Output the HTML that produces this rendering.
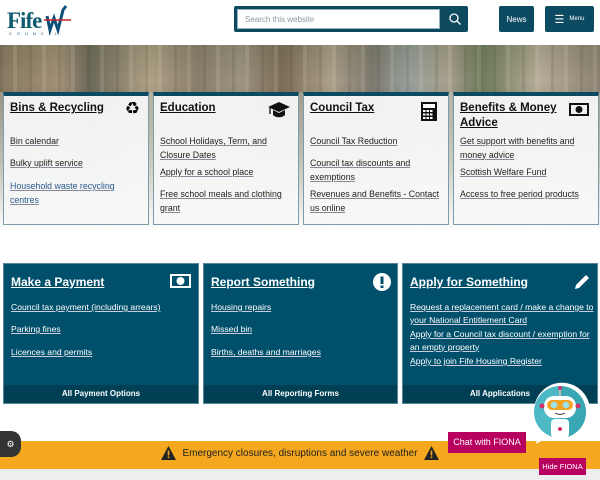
<!DOCTYPE html>
<html><head><meta charset="utf-8">
<style>
*{margin:0;padding:0;box-sizing:border-box}
body{width:600px;height:480px;overflow:hidden;font-family:"Liberation Sans",sans-serif;background:#fff;position:relative}
.hdr{position:absolute;left:0;top:0;width:600px;height:45px;background:#fff}
.search{position:absolute;left:234px;top:6px;width:234px;height:26px;border:1px solid #0d4a5f;border-radius:2px;background:#0d4a5f}
.search .in{position:absolute;left:2px;top:2px;width:203px;height:20px;background:#fff;border:1px solid #8fb0bd;font-size:8px;color:#8a99a0;padding:5px 7px}
.btn{position:absolute;top:6px;height:26px;background:#0b4a60;border-radius:2px;color:#fff;font-size:8px;display:flex;align-items:center;justify-content:center}
.hero{position:absolute;left:0;top:45px;width:600px;height:185px;overflow:hidden;
background:
repeating-linear-gradient(90deg,rgba(60,50,40,.12) 0 3px,rgba(255,255,255,0) 3px 13px,rgba(230,220,200,.15) 13px 17px,rgba(0,0,0,0) 17px 29px),
linear-gradient(180deg,rgba(70,80,50,.2) 0,rgba(0,0,0,0) 20%,rgba(40,40,30,.2) 45%,rgba(60,90,40,.35) 100%),
linear-gradient(90deg,#8a7a62 0%,#a39077 10%,#6d6a5a 15%,#b0a287 25%,#8b7f6c 33%,#9d9481 40%,#7d6d57 47%,#aca08a 55%,#7f7a70 62%,#97a09c 68%,#a8a08c 75%,#6d7a5b 80%,#b7ad98 90%,#8c8272 100%)}
.hero:after{content:"";position:absolute;left:0;top:47px;width:600px;height:140px;background:linear-gradient(180deg,rgba(200,210,200,.4),rgba(225,230,225,.7) 50%,#fff 100%)}
.card{position:absolute;top:92px;height:133px;width:146px;background:rgba(246,248,248,.93);border:1px solid #7d9ba8;border-top:4px solid #0b4a60}
.card h2{position:absolute;left:6px;top:5px;font-size:11.5px;font-weight:bold;color:#111;text-decoration:underline;line-height:15px}
.card .ic{position:absolute;right:8px;top:3px;font-size:17px}
.l{position:absolute;left:6px;font-size:8.8px;color:#222;text-decoration:underline;text-decoration-color:#889;line-height:13.5px;width:134px}
.dk{position:absolute;top:263px;height:141px;background:#00506b;border:1px solid #5a8797;color:#fff}
.dk h2{position:absolute;left:7px;top:11px;font-size:12px;font-weight:bold;text-decoration:underline}
.dk .l{color:#fff;text-decoration-color:#ccd;left:7px;width:186px;line-height:12.5px;font-size:8.6px}
.dk .ft{position:absolute;left:0;bottom:0;width:100%;height:18px;background:#013f55;font-size:8px;font-weight:bold;text-align:center;line-height:18px}
.warn{position:absolute;left:0;top:441px;width:600px;height:28px;background:#f4a71f;font-size:10px;color:#222;text-align:center;line-height:26px}
.tri{display:inline-block;vertical-align:middle;margin:0 6px}
</style></head><body>
<div class="hdr">
<svg style="position:absolute;left:7px;top:4px" width="64" height="32" viewBox="0 0 64 32">
<text x="0" y="24" font-family="Liberation Serif" font-weight="bold" font-size="23" fill="#0e5a6f" letter-spacing="-1">Fife</text>
<path d="M40 12 l3 14 l4 -12 l4 12 l5 -20 l3 -4" fill="none" stroke="#0e4f7a" stroke-width="3"/>
<path d="M37 16 L64 16" stroke="#c8202d" stroke-width="1.5"/>
<text x="2" y="31" font-size="4" letter-spacing="5" fill="#0e4f7a">COUNCIL</text>
</svg>
<div class="search"><div class="in">Search this website</div>
<svg style="position:absolute;left:213px;top:5px" width="14" height="14" viewBox="0 0 14 14"><circle cx="6" cy="6" r="4" fill="none" stroke="#fff" stroke-width="1.3"/><path d="M9 9l3.5 3.5" stroke="#fff" stroke-width="1.3"/></svg></div>
<div class="btn" style="left:499px;width:35px">News</div>
<div class="btn" style="left:545px;width:49px;font-size:6px"><span style="font-size:11px;margin-right:5px">☰</span>Menu</div>
</div>
<div class="hero"></div>

<div class="card" style="left:3px"><h2>Bins &amp; Recycling</h2><div class="ic">♻</div>
<div class="l" style="top:39px">Bin calendar</div><div class="l" style="top:61px">Bulky uplift service</div>
<div class="l" style="top:84px;color:#2a5a8a;width:118px">Household waste recycling centres</div></div>
<div class="card" style="left:153px"><h2>Education</h2>
<svg class="ic" style="right:8px;top:6px" width="22" height="16" viewBox="0 0 22 16"><path d="M11 0L22 5 11 10 0 5z" fill="#111"/><path d="M5 8v5c3 3 9 3 12 0V8l-6 3z" fill="#111"/><path d="M2 6v6" stroke="#111" stroke-width="1.3"/></svg>
<div class="l" style="top:39px">School Holidays, Term, and Closure Dates</div><div class="l" style="top:70px">Apply for a school place</div>
<div class="l" style="top:92px">Free school meals and clothing grant</div></div>
<div class="card" style="left:303px"><h2>Council Tax</h2>
<svg class="ic" style="right:11px;top:6px" width="16" height="19" viewBox="0 0 16 19"><rect x="0" y="0" width="16" height="19" fill="#111"/><rect x="2" y="2" width="12" height="4" fill="#fff"/><g fill="#fff"><rect x="2" y="8" width="2.5" height="2"/><rect x="5.5" y="8" width="2.5" height="2"/><rect x="9" y="8" width="2.5" height="2"/><rect x="2" y="11.5" width="2.5" height="2"/><rect x="5.5" y="11.5" width="2.5" height="2"/><rect x="9" y="11.5" width="2.5" height="2"/><rect x="2" y="15" width="2.5" height="2"/><rect x="5.5" y="15" width="2.5" height="2"/><rect x="9" y="15" width="2.5" height="2"/></g></svg>
<div class="l" style="top:39px">Council Tax Reduction</div><div class="l" style="top:61px">Council tax discounts and exemptions</div>
<div class="l" style="top:92px">Revenues and Benefits - Contact us online</div></div>
<div class="card" style="left:453px"><h2>Benefits &amp; Money<br>Advice</h2>
<svg class="ic" style="right:9px;top:7px" width="20" height="13" viewBox="0 0 20 13"><rect x="1" y="1" width="18" height="11" fill="none" stroke="#111" stroke-width="2"/><circle cx="10" cy="6.5" r="3.5" fill="#111"/></svg>
<div class="l" style="top:39px;width:125px">Get support with benefits and money advice</div><div class="l" style="top:70px">Scottish Welfare Fund</div>
<div class="l" style="top:92px">Access to free period products</div></div>

<div class="dk" style="left:3px;width:196px"><h2>Make a Payment</h2>
<svg style="position:absolute;right:7px;top:10px" width="21" height="14" viewBox="0 0 21 14"><rect x="1" y="1" width="19" height="12" fill="none" stroke="#fff" stroke-width="2"/><circle cx="10.5" cy="7" r="4" fill="#fff"/></svg>
<div class="l" style="top:37px">Council tax payment (including arrears)</div><div class="l" style="top:59px">Parking fines</div><div class="l" style="top:82px">Licences and permits</div>
<div class="ft">All Payment Options</div></div>
<div class="dk" style="left:203px;width:195px"><h2>Report Something</h2>
<svg style="position:absolute;right:6px;top:9px" width="18" height="18" viewBox="0 0 18 18"><circle cx="9" cy="9" r="9" fill="#fff"/><rect x="7.5" y="3.5" width="3" height="7.5" fill="#00506b"/><rect x="7.5" y="12.5" width="3" height="2.5" fill="#00506b"/></svg>
<div class="l" style="top:37px">Housing repairs</div><div class="l" style="top:59px">Missed bin</div><div class="l" style="top:82px">Births, deaths and marriages</div>
<div class="ft">All Reporting Forms</div></div>
<div class="dk" style="left:402px;width:196px"><h2>Apply for Something</h2>
<svg style="position:absolute;right:6px;top:9px" width="18" height="18" viewBox="0 0 18 18"><path d="M2 16l1-4L13 2l3 3L6 15z" fill="#fff"/></svg>
<div class="l" style="top:37px">Request a replacement card / make a change to your National Entitlement Card</div>
<div class="l" style="top:64px">Apply for a Council tax discount / exemption for an empty property</div>
<div class="l" style="top:91px">Apply to join Fife Housing Register</div>
<div class="ft">All Applications</div></div>

<div class="warn"><svg class="tri" width="15" height="14" viewBox="0 0 15 14"><path d="M7.5 0L15 14H0z" fill="#222"/><rect x="6.7" y="4.5" width="1.6" height="5" fill="#f4a71f"/><rect x="6.7" y="10.5" width="1.6" height="1.6" fill="#f4a71f"/></svg>Emergency closures, disruptions and severe weather<svg class="tri" width="15" height="14" viewBox="0 0 15 14"><path d="M7.5 0L15 14H0z" fill="#222"/><rect x="6.7" y="4.5" width="1.6" height="5" fill="#f4a71f"/><rect x="6.7" y="10.5" width="1.6" height="1.6" fill="#f4a71f"/></svg></div>
<div style="position:absolute;left:0;top:469px;width:600px;height:11px;background:#eeeeee"></div>
<div style="position:absolute;left:0;top:431px;width:21px;height:26px;background:#333;border-radius:0 10px 10px 0;color:#fff;font-size:9px;line-height:26px;text-align:center">⚙</div>

<svg style="position:absolute;left:522px;top:382px" width="68" height="66" viewBox="0 0 68 66">
<path d="M14 62 L18 46 A28 28 0 1 1 28 54 Z" fill="#fff"/>
<circle cx="38" cy="30" r="26" fill="#4cb9c4"/>
<path d="M38 4 A26 26 0 0 1 38 56 Z" fill="#3aa7b4"/>
<rect x="37" y="6" width="2" height="8" fill="#bbb"/><circle cx="38" cy="6" r="2" fill="#d0306b"/>
<rect x="22" y="14" width="32" height="22" rx="10" fill="#fff"/>
<rect x="25" y="18" width="26" height="10" rx="5" fill="#f2a324"/>
<circle cx="32" cy="23" r="3.3" fill="#9ce0ec"/><circle cx="44" cy="23" r="3.3" fill="#9ce0ec"/>
<path d="M33 31 q5 3 10 0" stroke="#333" stroke-width="1" fill="none"/>
<circle cx="20" cy="24" r="2.5" fill="#d0306b"/><circle cx="56" cy="24" r="2.5" fill="#d0306b"/>
<rect x="29" y="37" width="18" height="19" rx="4" fill="#fff"/><circle cx="38" cy="47" r="2" fill="#d0306b"/>
</svg>
<div style="position:absolute;left:448px;top:432px;width:78px;height:21px;background:#b8005e;color:#fff;font-size:9px;line-height:21px;text-align:center">Chat with FIONA</div>
<div style="position:absolute;left:539px;top:458px;width:47px;height:17px;background:#b8005e;color:#fff;font-size:7.5px;line-height:17px;text-align:center">Hide FIONA</div>
</body></html>
